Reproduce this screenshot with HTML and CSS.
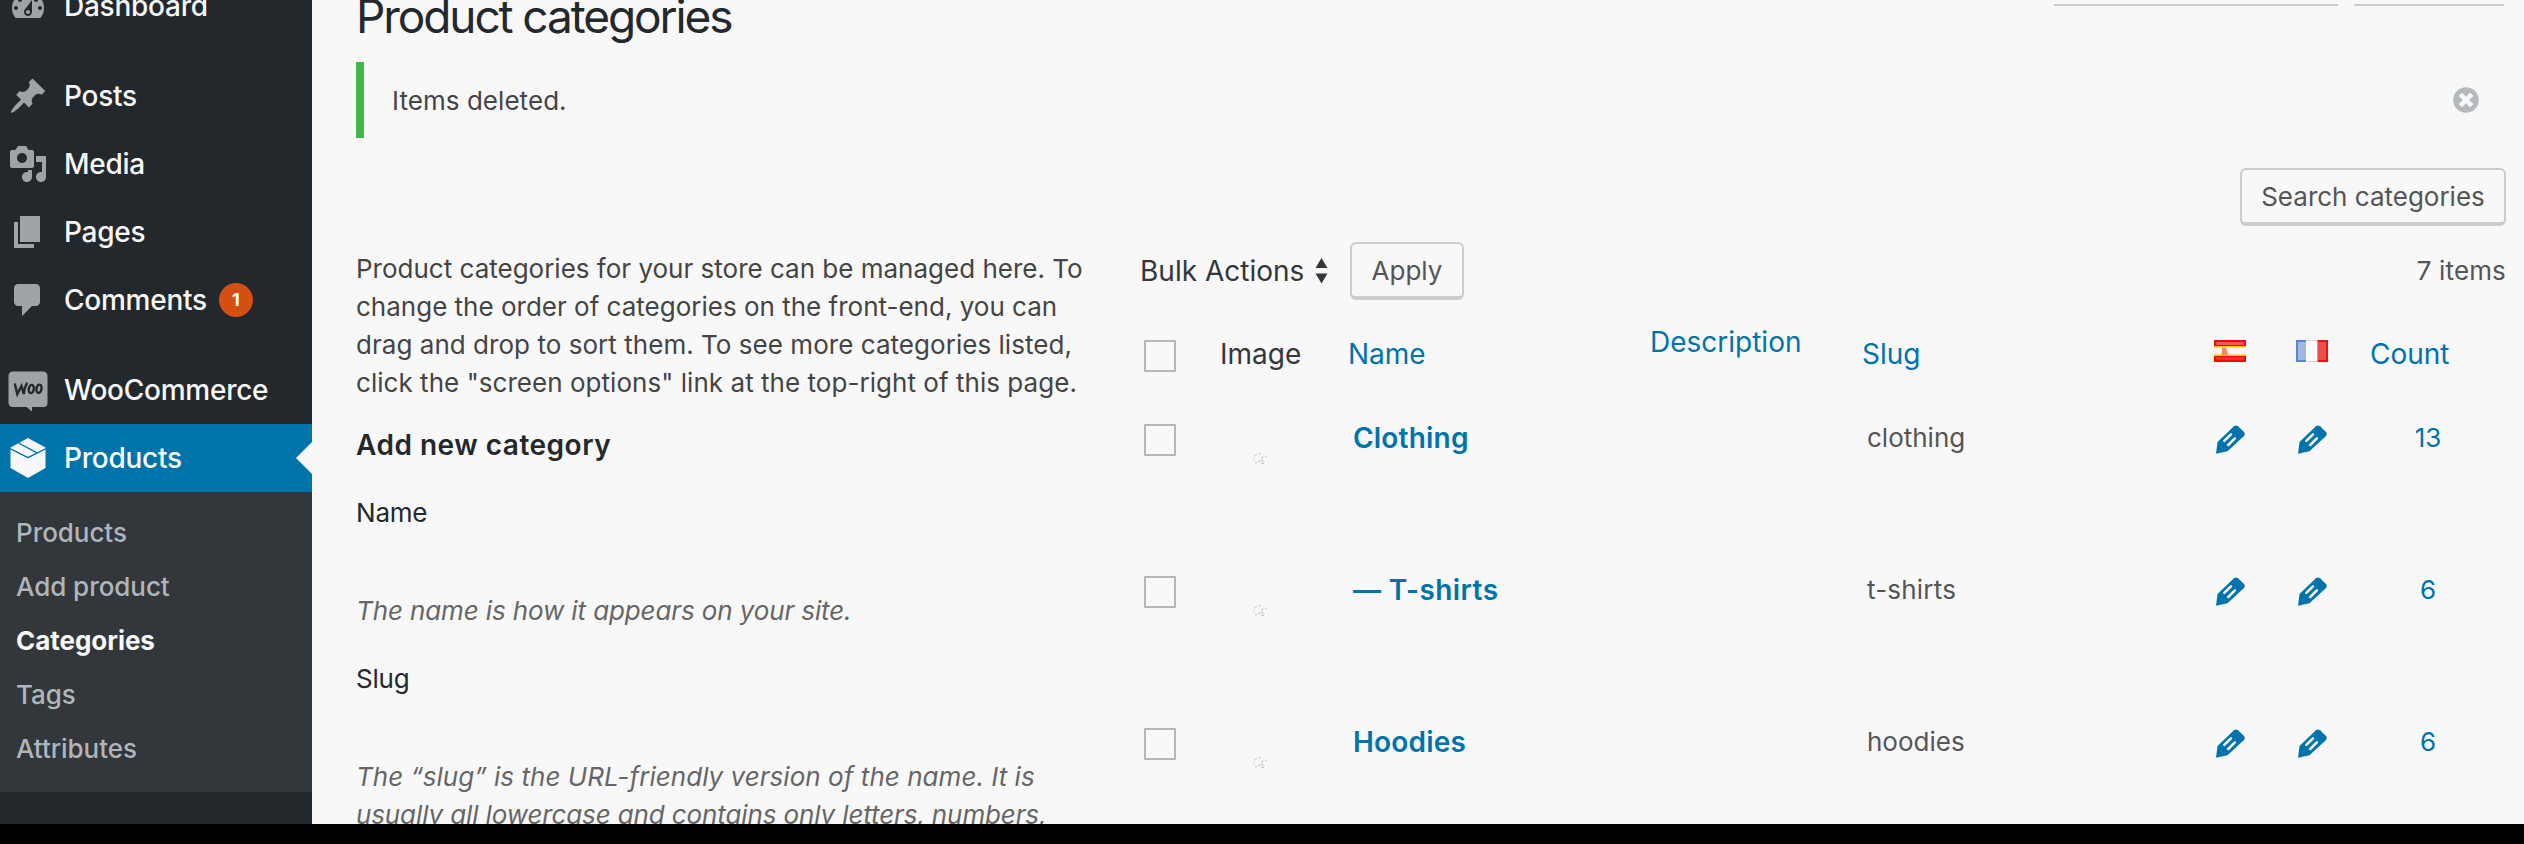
FILE: index.html
```html
<!DOCTYPE html>
<html lang="en">
<head>
<meta charset="utf-8">
<title>Product categories</title>
<link rel="stylesheet" href="styles.css">
</head>
<body>
<svg class="defs" aria-hidden="true">
  <symbol id="pencil" viewBox="0 0 29 29"><path d="M0 28.800 1.500 17 18 1.200Q20 -.4 22 1.200L28 7Q29.500 9 28 11L11.500 26.300Z" fill="currentColor"/><path d="M8.300 15.800 15 9.300M12.200 20 18.900 13.400" fill="none" stroke="#f8f8f8" stroke-width="2.500" stroke-linecap="round"/></symbol>
  <symbol id="thumb" viewBox="0 0 14 12"><path d="M1 5v1M.6 7.500v1M2 4l2-1.500M5.500 2 8 1M10 3.500 8.500 8 11 10.500M12 4.500h1.500M2 10.500h2M5 9.500l3-.5M8 11.500h3" fill="none" stroke="#c4c4c4"/></symbol>
</svg>
<div class="screen">
  <nav class="menu">
    <a class="item"><svg class="ico" viewBox="0 0 20 20"><path fill-rule="evenodd" d="M3.760 16h12.480c1.100-1.370 1.760-3.110 1.760-5 0-4.420-3.580-8-8-8s-8 3.580-8 8c0 1.890.66 3.630 1.760 5zM10 4c.55 0 1 .45 1 1s-.45 1-1 1-1-.45-1-1 .45-1 1-1zM6 6c.55 0 1 .45 1 1s-.45 1-1 1-1-.45-1-1 .45-1 1-1zm8 0c.55 0 1 .45 1 1s-.45 1-1 1-1-.45-1-1 .45-1 1-1zm-5.370 5.550L12 7v6c0 1.100-.9 2-2 2s-2-.9-2-2c0-.57.24-1.080.63-1.450zM4 10c.55 0 1 .45 1 1s-.45 1-1 1-1-.45-1-1 .45-1 1-1zm12 0c.55 0 1 .45 1 1s-.45 1-1 1-1-.45-1-1 .45-1 1-1zm-5 3c0-.55-.45-1-1-1s-1 .45-1 1 .45 1 1 1 1-.45 1-1z"/></svg><span>Dashboard</span></a>
    <a class="item gap"><svg class="ico" viewBox="0 0 20 20"><path d="M10.440 3.020l1.820-1.820 6.360 6.350-1.830 1.820c-1.050-.68-2.480-.57-3.410.36l-.75.750c-.92.930-1.040 2.350-.35 3.410l-1.830 1.820-2.410-2.410-2.800 2.790c-.42.420-3.380 2.710-3.800 2.290s1.860-3.390 2.280-3.810l2.790-2.790L4.100 9.360l1.830-1.820c1.050.69 2.480.57 3.400-.36l.75-.750c.93-.92 1.050-2.350.36-3.410z"/></svg><span>Posts</span></a>
    <a class="item"><svg class="ico" viewBox="0 0 20 20"><path fill-rule="evenodd" d="M13 11V4c0-.55-.45-1-1-1h-1.670L9 1H5L3.670 3H2c-.55 0-1 .45-1 1v7c0 .55.45 1 1 1h10c.55 0 1-.45 1-1zM7 4.500c1.380 0 2.500 1.120 2.500 2.500S8.380 9.500 7 9.500 4.500 8.380 4.500 7 5.620 4.500 7 4.500zM14 6h5v10.500c0 1.380-1.120 2.500-2.500 2.500S14 17.880 14 16.500s1.120-2.500 2.500-2.500c.17 0 .34.020.5.050V9h-3V6zm-4 8.050V13h2v3.500c0 1.380-1.120 2.500-2.500 2.500S7 17.880 7 16.500 8.120 14 9.500 14c.17 0 .34.020.5.050z"/></svg><span>Media</span></a>
    <a class="item"><svg class="ico" viewBox="0 0 20 20"><path d="M6 15V2h10v13H6zm-1 1h8v2H3V5h2v11z"/></svg><span>Pages</span></a>
    <a class="item"><svg class="ico" viewBox="0 0 20 20"><path d="M5 2h9c1.100 0 2 .9 2 2v7c0 1.100-.9 2-2 2h-2l-5 5v-5H5c-1.100 0-2-.9-2-2V4c0-1.100.9-2 2-2z"/></svg><span>Comments</span><b class="badge">1</b></a>
    <a class="item gap"><svg class="woo" viewBox="0 0 40 41"><path d="M5 .5h30a4.500 4.500 0 0 1 4.500 4.500v27a4 4 0 0 1-4 4H24v4.500L18.500 36H5a4.500 4.500 0 0 1-4.500-4V5A4.500 4.500 0 0 1 5 .5z" fill="#9ea3a8"/><path d="M7 13.500l2.300 9.500 4.200-8 2.200 8q.7-6 3-10.500" class="ink"/><ellipse cx="23.300" cy="18" rx="2.500" ry="4.200" transform="rotate(10 23.300 18)" class="ink"/><ellipse cx="31" cy="17.800" rx="2.500" ry="4.200" transform="rotate(10 31 17.800)" class="ink"/></svg><span>WooCommerce</span></a>
    <a class="item current"><svg class="box" viewBox="0 0 36 40"><path fill="#f8f8f8" d="M18 0 35.500 9.500V30L18 40 .5 30V9.500Z"/><path d="M0 10.500 18 19.700 36 10.500M8.500 5 27 14.800" fill="none" stroke="#0073aa" stroke-width="1.400"/></svg><span>Products</span></a>
    <div class="sub">
      <a>Products</a><a>Add product</a><a class="on">Categories</a><a>Tags</a><a>Attributes</a>
    </div>
  </nav>
  <main class="main">
    <header class="top"><h1>Product categories</h1><div class="tabs"><i class="t1"></i><i class="t2"></i></div></header>
    <div class="notice"><p>Items deleted.</p><svg class="close" viewBox="0 0 26 26"><circle cx="13" cy="13" r="12.800" fill="#b4b9be"/><path d="M7.300 7.300 18.700 18.700M18.700 7.300 7.300 18.700" stroke="#f8f8f8" stroke-width="4.600"/></svg></div>
    <div class="search"><button class="btn">Search categories</button></div>
    <div class="cols">
      <section class="form">
        <p class="intro">Product categories for your store can be managed here. To<br>change the order of categories on the front-end, you can<br><span class="wide">drag and drop to sort them. To see more categories listed,<br>click the "screen options" link at the top-right of this page.</span></p>
        <h2>Add new category</h2>
        <label>Name</label>
        <p class="hint">The name is how it appears on your site.</p>
        <label>Slug</label>
        <p class="hint"><span class="even">The “slug” is the URL-friendly version of the name. It is</span><br>usually all lowercase and contains only letters, numbers,</p>
      </section>
      <section class="list">
        <div class="bar"><span class="bulk">Bulk Actions</span><svg class="updown" viewBox="0 0 13 26"><path d="M6.500 0 12.500 10H.5ZM6.500 25.500 12.500 15.500H.5Z" fill="#32373c"/></svg><button class="btn apply">Apply</button><span class="total">7 items</span></div>
        <div class="row head"><i class="cb"></i><span class="img">Image</span><span class="name">Name</span><span class="desc">Description</span><span class="slug">Slug</span>
          <svg class="flag" viewBox="0 0 32 22"><path fill="#f50a0a" d="M0 0h32v22H0z"/><path fill="#f45b50" d="M2 2h28v3H2z"/><path fill="#f03020" d="M2 17h28v3H2z"/><path fill="#ffc400" d="M0 6h32v10H0z"/><path fill="#fff8ee" d="M0 7.500h32v7H0z"/><path fill="#f08a60" d="M8 8h4l1 3 1 4H7l1-3z"/></svg>
          <svg class="flag" viewBox="0 0 32 22"><path fill="#5c85cf" d="M0 0h11v22H0z"/><path fill="#9db9e4" d="M2 2h8v18H2z"/><path fill="#fdfdfd" d="M10 0h12v22H10z"/><path fill="#d5d5d5" d="M11 0h10v1H11zM11 21h10v1H11z"/><path fill="#e8120f" d="M21.500 0H32v22H21.500z"/><path fill="#ea5048" d="M22 2h8v18h-8z"/></svg>
          <span class="count">Count</span></div>
        <div class="row"><i class="cb"></i><svg class="thumb"><use href="#thumb"/></svg><b class="name">Clothing</b><span class="desc"></span><span class="slug">clothing</span><svg class="pen"><use href="#pencil"/></svg><svg class="pen"><use href="#pencil"/></svg><span class="count">13</span></div>
        <div class="row"><i class="cb"></i><svg class="thumb"><use href="#thumb"/></svg><b class="name child">— T-shirts</b><span class="desc"></span><span class="slug sp">t-shirts</span><svg class="pen"><use href="#pencil"/></svg><svg class="pen"><use href="#pencil"/></svg><span class="count">6</span></div>
        <div class="row"><i class="cb"></i><svg class="thumb"><use href="#thumb"/></svg><b class="name">Hoodies</b><span class="desc"></span><span class="slug">hoodies</span><svg class="pen"><use href="#pencil"/></svg><svg class="pen"><use href="#pencil"/></svg><span class="count">6</span></div>
      </section>
    </div>
  </main>
</div>
</body>
</html>
```

FILE: styles.css
```css
* { box-sizing: border-box; }
body { margin: 0; height: 844px; overflow: hidden; background: #000; font-family: Inter, "Liberation Sans", sans-serif; font-size: 26px; line-height: 38px; color: #444; }
h1, h2, p { margin: 0; }
.defs { display: none; }
.screen { display: flex; height: 824px; overflow: hidden; background: #f8f8f8; }

.menu { flex: none; width: 312px; background: #23282d; margin-top: -28px; height: 852px; }
.item { display: flex; align-items: center; height: 68px; padding-left: 8px; color: #f8f8f8; font-size: 28px; font-weight: 500; }
.item span { margin-left: 16px; letter-spacing: -.25px; }
.gap { margin-top: 22px; }
.ico { width: 40px; height: 40px; fill: #9ea3a8; }
.woo { width: 40px; height: 41px; margin-bottom: -2px; }
.ink { fill: none; stroke: #23282d; stroke-width: 2.4; stroke-linecap: round; }
.box { width: 36px; height: 40px; margin: 0 2px; }
.badge { width: 34px; height: 34px; border-radius: 50%; background: #d54e12; margin-left: 12px; font-size: 18px; line-height: 34px; text-align: center; }
.current { position: relative; background: #0073aa; }
.current::after { content: ""; position: absolute; right: 0; top: 18px; border: 16px solid transparent; border-right-color: #f8f8f8; border-left: 0; }
.sub { height: 300px; padding: 14px 16px; background: #32373c; display: flex; flex-direction: column; line-height: 54px; font-weight: 500; letter-spacing: -.05px; color: #b0b5ba; }
.sub .on { color: #f8f8f8; font-weight: 700; }

.main { flex: 1; padding: 0 18px 0 44px; }
.top { display: flex; justify-content: space-between; height: 62px; }
h1 { font-size: 46px; line-height: 56px; margin-top: -12px; font-weight: 400; letter-spacing: -2.1px; color: #23282d; }
.tabs { display: flex; gap: 16px; padding: 4px 2px 0 0; }
.tabs i { height: 2px; background: #ccc; }
.t1 { width: 284px; }
.t2 { width: 150px; }
.notice { display: flex; justify-content: space-between; align-items: center; height: 76px; border-left: 8px solid #41b64b; padding: 0 27px 0 28px; }
.notice p { padding-top: 2px; letter-spacing: .05px; }
.close { width: 26px; height: 26px; }
.search { display: flex; justify-content: flex-end; padding-top: 30px; height: 104px; }
.btn { font: inherit; color: #555; background: #f8f8f8; border: 2px solid #ccc; border-bottom-width: 4px; border-radius: 6px; height: 58px; width: 266px; padding: 1px 0 0; line-height: 50px; white-space: nowrap; }

.cols { display: flex; }
.form { width: 784px; padding-top: 8px; white-space: nowrap; }
.intro { padding-bottom: 23px; }
.wide { letter-spacing: .04px; }
h2 { font-size: 28px; line-height: 40px; font-weight: 600; letter-spacing: .5px; color: #23282d; }
label { display: block; margin-top: 29px; color: #23282d; letter-spacing: -.2px; }
.hint { margin-top: 60px; color: #666; font-style: italic; height: 38px; letter-spacing: -.12px; }
.even { letter-spacing: .04px; }
.hint + label { margin-top: 30px; }

.list { flex: 1; }
.bar { display: flex; align-items: center; height: 58px; white-space: nowrap; }
.bulk { width: 175px; font-size: 28px; color: #32373c; }
.updown { width: 13px; height: 26px; margin-right: 22px; }
.apply { width: 114px; }
.total { margin-left: auto; color: #555; letter-spacing: .15px; }
.row { display: grid; grid-template-columns: 81px 128px 302px 212px 351px 82px 76px 1fr; height: 152px; padding-top: 24px; line-height: 40px; white-space: nowrap; }
.cb { width: 32px; height: 32px; margin-left: 4px; border: 2px solid #b4b9be; }
.head { height: 100px; padding-top: 40px; font-size: 28px; color: #0073aa; }
.head .img { color: #32373c; }
.head span { margin: -6px 0 0 -1px; }
.head .desc { margin-top: -18px; }
.flag { width: 32px; height: 22px; }
.name { font-size: 28px; }
b.name { color: #0073aa; font-weight: 600; letter-spacing: .2px; margin: -6px 0 0 4px; }
b.child { letter-spacing: .4px; }
.slug { color: #555; margin: -6px 0 0 4px; }
.sp { letter-spacing: .2px; }
.head .slug { color: #0073aa; margin-left: -1px; }
.thumb { width: 14px; height: 12px; margin: 28px 0 0 32px; }
.pen { width: 29px; height: 29px; margin: 1px 0 0 2px; color: #0073aa; }
.count { color: #0073aa; width: 112px; margin-top: -6px; text-align: center; }
.head .count { text-align: left; margin-left: -2px; }
```
